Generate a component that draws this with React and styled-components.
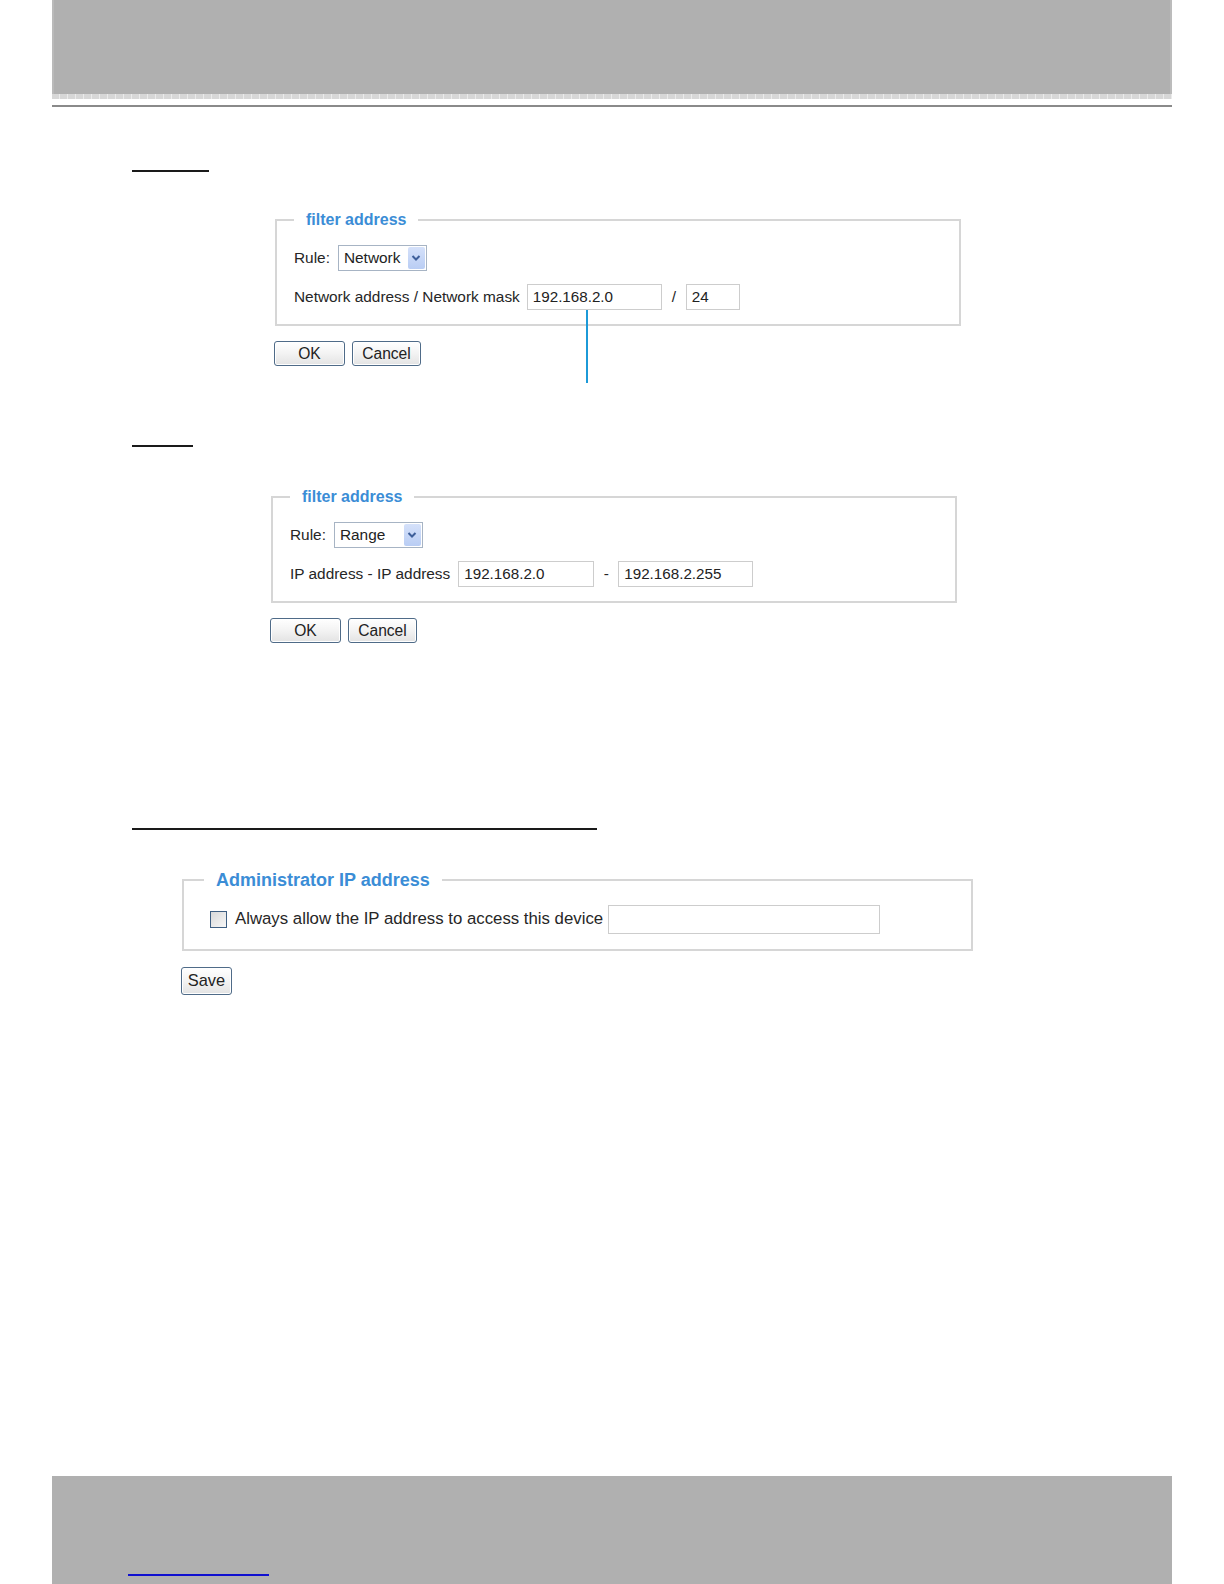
import React from "react";
import styled, { createGlobalStyle } from "styled-components";

const Global = createGlobalStyle`
  html, body { margin: 0; padding: 0; background: #ffffff; }
  body { font-family: "Liberation Sans", Arial, sans-serif; color: #222; }
`;

const Page = styled.div`
  width: 1224px;
  min-height: 1584px;
  display: flex;
  flex-direction: column;
  background: #fff;
`;

const Header = styled.header`
  margin: 0 52px;
  display: flex;
  flex-direction: column;
`;

const HeaderBand = styled.div`
  height: 94px;
  background: #b0b0b0;
  box-shadow: inset 2px 0 0 #bababa, inset -2px 0 0 #bcbcbc;
`;

const HeaderStrip = styled.div`
  height: 5px;
  background: repeating-linear-gradient(90deg, #cdcdcd 0 7px, #e6e6e6 7px 8px);
  opacity: 0.8;
`;

const HeaderRule = styled.div`
  margin-top: 6px;
  height: 2px;
  background: #8a8a8a;
`;

const Underline = styled.div`
  margin-left: 132px;
  margin-top: ${(p) => p.$top}px;
  width: ${(p) => p.$width}px;
  height: ${(p) => p.$thick || 2}px;
  background: #1a1a1a;
`;

const Box = styled.fieldset`
  margin: ${(p) => p.$top}px 0 0 ${(p) => p.$left}px;
  width: ${(p) => p.$width}px;
  box-sizing: border-box;
  border: 2px solid #d6d6d6;
  padding: ${(p) => p.$padTop}px 17px ${(p) => p.$padBottom}px 17px;
  min-inline-size: 0;
  display: flex;
  flex-direction: column;
  gap: ${(p) => p.$gap || 0}px;
`;

const Legend = styled.legend`
  padding: 0 ${(p) => p.$pad || 12}px;
  margin-left: ${(p) => p.$shift || 0}px;
  font-weight: bold;
  font-size: ${(p) => p.$size || 16}px;
  line-height: ${(p) => p.$lh || 18}px;
  color: #3b8dd6;
`;

const Row = styled.div`
  display: flex;
  align-items: center;
  font-size: ${(p) => p.$size || 15.4}px;
  color: #262626;
`;

const Label = styled.span`
  margin-right: ${(p) => p.$gap || 7}px;
  white-space: nowrap;
`;

const Sep = styled.span`
  width: ${(p) => p.$w}px;
  text-align: center;
`;

const Select = styled.div`
  width: ${(p) => p.$width || 89}px;
  height: 26px;
  box-sizing: border-box;
  border: 1px solid #a7b4c4;
  background: #fff;
  display: flex;
  align-items: stretch;
`;

const SelectText = styled.span`
  flex: 1;
  padding-left: 5px;
  line-height: 23px;
  font-size: 15.4px;
  color: #222;
`;

const SelectArrow = styled.span`
  width: 17px;
  margin: 1px;
  background: linear-gradient(#d5e1fa, #b9cdf4);
  border-radius: 2px;
  display: flex;
  align-items: center;
  justify-content: center;
`;

const InputWrap = styled.div`
  position: relative;
  display: flex;
`;

const TextInput = styled.div`
  width: ${(p) => p.$width}px;
  height: ${(p) => p.$height || 26}px;
  box-sizing: border-box;
  border: 1px solid #cdcdcd;
  padding-left: 5px;
  line-height: ${(p) => (p.$height || 26) - 2}px;
  font-size: 15.2px;
  color: #222;
  background: #fff;
`;

const Callout = styled.div`
  position: absolute;
  left: 59px;
  top: 100%;
  width: 2px;
  height: 73px;
  background: #1c9ad8;
`;

const Buttons = styled.div`
  margin: ${(p) => p.$top}px 0 0 ${(p) => p.$left}px;
  display: flex;
  gap: 7px;
`;

const Button = styled.button`
  width: ${(p) => p.$width}px;
  height: ${(p) => p.$height || 25}px;
  box-sizing: border-box;
  padding: 0;
  border: 1px solid #4f6b88;
  border-radius: 3px;
  background: linear-gradient(#ffffff, #f3f3f3 50%, #e3e3e3);
  font-family: "Liberation Sans", Arial, sans-serif;
  font-size: ${(p) => p.$size || 15.6}px;
  color: #222;
  box-shadow: inset 0 0 0 1px #ffffff;
`;

const Check = styled.span`
  width: 17px;
  height: 17px;
  flex: none;
  box-sizing: border-box;
  border: 1px solid #3f5f82;
  background: linear-gradient(135deg, #d9d9d9, #f7f7f7);
  margin: 0 8px 0 9px;
`;

const Footer = styled.footer`
  margin: auto 52px 0;
  height: 108px;
  background: #b0b0b0;
  display: flex;
  align-items: flex-end;
  padding: 0 0 8px 76px;
  box-sizing: border-box;
`;

const FooterLink = styled.a`
  display: block;
  width: 141px;
  height: 2px;
  background: #1010d0;
`;

const Chevron = () => (
  <svg width="10" height="8" viewBox="0 0 10 8">
    <path d="M1.5 2 L5 5.5 L8.5 2" fill="none" stroke="#3e5f9a" strokeWidth="2" />
  </svg>
);

function FilterBox({ top, left, rule, label, labelGap, first, sepGap, sep, second, secondWidth, firstWidth, callout }) {
  return (
    <Box $top={top} $left={left} $width={686} $padTop={16} $padBottom={14} $gap={13}>
      <Legend>filter address</Legend>
      <Row>
        <Label $gap={8}>Rule:</Label>
        <Select>
          <SelectText>{rule}</SelectText>
          <SelectArrow>
            <Chevron />
          </SelectArrow>
        </Select>
      </Row>
      <Row>
        <Label $gap={labelGap}>{label}</Label>
        <InputWrap>
          <TextInput $width={firstWidth}>{first}</TextInput>
          {callout && <Callout />}
        </InputWrap>
        <Sep $w={sepGap}>{sep}</Sep>
        <TextInput $width={secondWidth}>{second}</TextInput>
      </Row>
    </Box>
  );
}

export default function App() {
  return (
    <Page>
      <Global />
      <Header>
        <HeaderBand />
        <HeaderStrip />
        <HeaderRule />
      </Header>

      <Underline $top={63} $width={77} />
      <FilterBox
        top={39}
        left={275}
        rule="Network"
        label="Network address / Network mask"
        labelGap={7}
        first="192.168.2.0"
        firstWidth={135}
        sep="/"
        sepGap={24}
        second="24"
        secondWidth={54}
        callout
      />
      <Buttons $top={15} $left={274}>
        <Button $width={71}>OK</Button>
        <Button $width={69}>Cancel</Button>
      </Buttons>

      <Underline $top={79} $width={61} />
      <FilterBox
        top={41}
        left={271}
        rule="Range"
        label="IP address - IP address"
        labelGap={8}
        first="192.168.2.0"
        firstWidth={136}
        sep="-"
        sepGap={24}
        second="192.168.2.255"
        secondWidth={135}
      />
      <Buttons $top={15} $left={270}>
        <Button $width={71}>OK</Button>
        <Button $width={69}>Cancel</Button>
      </Buttons>

      <Underline $top={185} $width={465} $thick={1.5} />
      <Box $top={40} $left={182} $width={791} $padTop={15} $padBottom={15}>
        <Legend $size={18} $lh={20} $pad={12} $shift={3}>Administrator IP address</Legend>
        <Row $size={16.8}>
          <Check />
          <Label $gap={5}>Always allow the IP address to access this device</Label>
          <TextInput $width={272} $height={29} />
        </Row>
      </Box>
      <Buttons $top={16} $left={181}>
        <Button $width={51} $height={28} $size={16.4}>Save</Button>
      </Buttons>

      <Footer>
        <FooterLink />
      </Footer>
    </Page>
  );
}
